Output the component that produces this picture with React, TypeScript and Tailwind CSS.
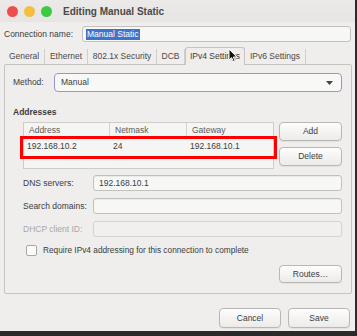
import React from "react";

const font = "font-['Liberation_Sans',Arial,sans-serif]";

function Btn({ children, className = "" }: { children: React.ReactNode; className?: string }) {
  return (
    <div
      className={`flex items-center justify-center rounded-[4px] border border-[#b9b7b3] bg-gradient-to-b from-[#fdfdfd] to-[#ecebe9] text-[8.5px] text-[#3c3c3c] shadow-[0_1px_0_rgba(0,0,0,0.05)] ${className}`}
    >
      {children}
    </div>
  );
}

function Input({ value = "", disabled = false }: { value?: string; disabled?: boolean }) {
  return (
    <div
      className={`flex h-[16px] flex-1 items-center rounded-[3px] border px-[5px] text-[8.5px] ${
        disabled
          ? "border-[#d6d4d1] bg-[#f1f0ef]"
          : "border-[#c3c1be] bg-[#f7f7f6] shadow-[inset_0_1px_1px_rgba(0,0,0,0.06)]"
      }`}
    >
      {value}
    </div>
  );
}

export default function App() {
  const tabs = [
    { label: "General", w: 41 },
    { label: "Ethernet", w: 43 },
    { label: "802.1x Security", w: 69 },
    { label: "DCB", w: 28 },
  ];
  return (
    <div className={`relative h-[336px] w-[357px] overflow-hidden whitespace-nowrap bg-[#2b2b2b] ${font} text-[#3c3c3c]`}>
      <div className="flex h-[331px] w-[355px] flex-col bg-[#efeeec]">
        {/* Title bar */}
        <div className="flex h-[22px] items-center bg-gradient-to-b from-[#eceae8] to-[#e6e5e3] pl-[7px]">
          <div className="h-[11px] w-[11px] rounded-full bg-[#ee4d4f]" />
          <div className="ml-[6px] h-[11px] w-[11px] rounded-full bg-[#f6be3d]" />
          <div className="ml-[6px] h-[11px] w-[11px] rounded-full bg-[#3ec843]" />
          <div className="ml-[11px] text-[10px] font-bold text-[#4a4a4a]">Editing Manual Static</div>
        </div>

        {/* Connection name */}
        <div className="mt-[4px] flex h-[16px] items-center pl-[4px] pr-[4px]">
          <div className="w-[78px] text-[8.5px]">Connection name:</div>
          <div className="flex h-[16px] flex-1 items-center rounded-[3px] border border-[#c3c1be] bg-[#f7f7f6] px-[3px] text-[8.5px]">
            <span className="bg-[#3f73c9] px-[1px] leading-[11px] text-white">Manual Static</span>
          </div>
        </div>

        {/* Tabs */}
        <div className="mt-[4px] flex h-[18px] items-end pl-[4px]">
          {tabs.map((t) => (
            <div
              key={t.label}
              style={{ width: t.w }}
              className="flex h-[15px] items-center justify-center border-r border-[#d2d0cd] text-[8.5px] text-[#4a4a4a]"
            >
              {t.label}
            </div>
          ))}
          <div className="relative -mb-px flex h-[18px] w-[60px] items-center justify-center rounded-t-[3px] border border-b-0 border-[#c6c4c1] bg-[#efeeec] text-[8.5px]">
            IPv4 Settings
          </div>
          <div className="flex h-[15px] w-[61px] items-center justify-center border-r border-[#d2d0cd] text-[8.5px] text-[#4a4a4a]">
            IPv6 Settings
          </div>
        </div>

        {/* Panel */}
        <div className="mx-[4px] flex h-[230px] w-[348px] flex-col rounded-[2px] border border-[#c6c4c1] pl-[8px] pr-[9px]">
          <div className="mt-[8px] flex h-[19px] items-center">
            <div className="w-[41px] text-[8.5px]">Method:</div>
            <div className="flex h-[19px] flex-1 items-center justify-between rounded-[4px] border border-[#9b94d0] bg-[#f8f8f7] pl-[6px] pr-[8px] text-[8.5px]">
              <span>Manual</span>
              <svg width="7" height="4" viewBox="0 0 7 4">
                <path d="M0 0 L7 0 L3.5 4 Z" fill="#444" />
              </svg>
            </div>
          </div>

          <div className="mt-[14px] text-[8.5px] font-bold leading-[12px]">Addresses</div>

          <div className="pl-[10px]">
            <div className="mt-[4px] flex">
              <div className="relative h-[47px] w-[251px] border border-[#cfcdca] bg-[#f5f5f4]">
                <div className="flex h-[15px] text-[8.5px] text-[#5a5a5a]">
                  <div className="flex w-[86px] items-center border-r border-[#d4d2cf] pl-[5px]">Address</div>
                  <div className="flex w-[77px] items-center border-r border-[#d4d2cf] pl-[5px]">Netmask</div>
                  <div className="flex flex-1 items-center pl-[5px]">Gateway</div>
                </div>
                <div className="flex h-[17px] text-[8.5px]">
                  <div className="flex w-[86px] items-center pl-[3px]">192.168.10.2</div>
                  <div className="flex w-[77px] items-center pl-[3px]">24</div>
                  <div className="flex flex-1 items-center pl-[3px]">192.168.10.1</div>
                </div>
                <div className="absolute left-[-4px] top-[13px] h-[23px] w-[257px] border-[3px] border-[#ff0000]" />
              </div>
              <div className="ml-[5px] flex flex-col">
                <Btn className="h-[19px] w-[63px]">Add</Btn>
                <Btn className="mt-[6px] h-[19px] w-[63px]">Delete</Btn>
              </div>
            </div>

            <div className="mt-[6px] flex h-[16px] items-center">
              <div className="w-[70px] text-[8.5px]">DNS servers:</div>
              <Input value="192.168.10.1" />
            </div>
            <div className="mt-[7px] flex h-[16px] items-center">
              <div className="w-[70px] text-[8.5px]">Search domains:</div>
              <Input />
            </div>
            <div className="mt-[7px] flex h-[16px] items-center">
              <div className="w-[70px] text-[8.5px] text-[#a9a8a6]">DHCP client ID:</div>
              <Input disabled />
            </div>
            <div className="mt-[8px] flex h-[11px] items-center pl-[3px]">
              <div className="h-[11px] w-[11px] rounded-[2px] border border-[#a9a7a4] bg-[#fbfbfa]" />
              <div className="ml-[6px] text-[8.3px]">Require IPv4 addressing for this connection to complete</div>
            </div>
          </div>

          <div className="mt-[9px] flex justify-end">
            <Btn className="h-[18px] w-[63px]">Routes…</Btn>
          </div>
        </div>

        {/* Bottom buttons */}
        <div className="mt-[14px] flex justify-end pr-[5px]">
          <Btn className="h-[20px] w-[62px]">Cancel</Btn>
          <Btn className="ml-[7px] h-[20px] w-[62px]">Save</Btn>
        </div>
      </div>

      {/* Mouse cursor */}
      <svg className="absolute left-[228px] top-[48px]" width="10" height="15" viewBox="0 0 10 15">
        <path d="M1 1 L1 12 L3.6 9.6 L5.6 14 L7.2 13.3 L5.3 9 L8.8 9 Z" fill="#111" stroke="#fff" strokeWidth="1" strokeLinejoin="round" />
      </svg>
    </div>
  );
}
